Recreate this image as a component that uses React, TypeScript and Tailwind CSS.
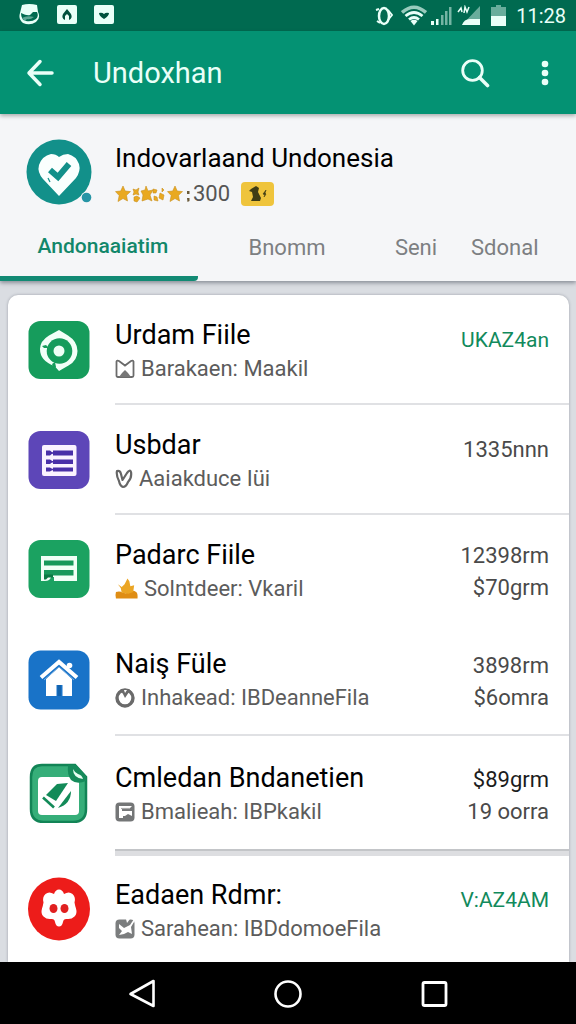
import type { ReactNode } from "react";

type Row = {
  title: string;
  sub: string;
  trailing: string[];
  accent?: boolean;
  strong?: boolean;
  divider?: boolean;
  height: string;
  icon: ReactNode;
  subIcon: ReactNode;
};

const TargetIcon = () => (
  <svg viewBox="0 0 62 60" className="h-[60px] w-[62px]" aria-hidden="true">
    <rect x="0.5" y="1" width="61" height="58" rx="12" fill="#169c5c" />
    <path d="M31 10l9 5.500q9.500 6 9.500 15.500t-9 14.500L31 51l-4.500-5Q12 41 12 29q0-8 9-13.500z" fill="#f2fff8" />
    <circle cx="31.500" cy="31" r="12.800" fill="#169c5c" />
    <path d="M14 26l4-1 3 3-5 0zM24 44l3-2 1 5-2 2z" fill="#169c5c" />
    <circle cx="31" cy="31" r="5.500" fill="#effff6" />
  </svg>
);

const ListIcon = () => (
  <svg viewBox="0 0 62 60" className="h-[60px] w-[62px]" aria-hidden="true">
    <rect x="0.500" y="1" width="61" height="58" rx="12" fill="#5d46b8" />
    <rect x="14" y="15" width="34.500" height="31" rx="2" fill="#fbf3ff" />
    <path d="M25 20.500h20v5H25zM25 29.500h20v4.500H25zM25 37.500h20v4H25z" fill="#4a30a8" />
    <path d="M18 20.500h4l3 2.500-3 2.500h-4zM18 29.500h4l3 2-3 2.500h-4zM18 37.500h4l3 2-3 2h-4z" fill="#4a30a8" />
    <path d="M22 23h4M22 31.700h4M22 39.500h4" stroke="#4a30a8" strokeWidth="1.500" />
  </svg>
);

const CardIcon = () => (
  <svg viewBox="0 0 62 60" className="h-[60px] w-[62px]" aria-hidden="true">
    <rect x="0.500" y="1" width="61" height="58" rx="12" fill="#1ba261" />
    <path d="M13 17h36v25H26v-4h-3q-1 4-6 4h-4z" fill="#f0fff6" />
    <path d="M16 21.500h29.500v5H16zM16 31h29.500v5.500H16z" fill="#16995a" />
    <path d="M16 35.500h9v3h-5l-2 2h-2z" fill="#087a43" />
  </svg>
);

const HouseIcon = () => (
  <svg viewBox="0 0 62 60" className="h-[60px] w-[62px]" aria-hidden="true">
    <rect x="0.500" y="0.500" width="61" height="59" rx="12" fill="#1973c8" />
    <path d="M31 17L18 29v17h10.500V35h6v11H44V29z" fill="#fff" />
    <path d="M13 27.500L31 12l18 15.500" fill="none" stroke="#fff" strokeWidth="4" />
    <path d="M16 30L31 17l15 13" fill="none" stroke="#75aee2" strokeWidth="1" />
    <circle cx="41.500" cy="15.500" r="2.800" fill="#fff" />
    <path d="M29.500 35H33v11h-3.500z" fill="#1262ad" />
  </svg>
);

const NoteIcon = () => (
  <svg viewBox="0 0 62 60" className="h-[60px] w-[62px]" aria-hidden="true">
    <path d="M14 2h33l11 12v32q0 13-13 13H16Q3 59 3 46V14Q3 2 14 2z" fill="#36ae79" stroke="#128456" strokeWidth="2.500" />
    <rect x="10" y="14" width="41" height="38" rx="4" fill="#fff" />
    <path d="M40 2h8l10 11v5q-9 4-15-1-4-5-3-15z" fill="#168b5b" />
    <path d="M45 6q0 9 10 10-1-4-5-5-3-1-5-5z" fill="#e8fff3" />
    <path d="M18 32l11-11 11-1-12 18z" fill="#128a58" />
    <path d="M15 34.500l11 10" stroke="#128a58" strokeWidth="2.600" />
    <path d="M30 45l13-17q0 13-13 17z" fill="#128a58" />
  </svg>
);

const FlowerIcon = () => (
  <svg viewBox="0 0 64 64" className="-mx-px h-[64px] w-[64px]" aria-hidden="true">
    <ellipse cx="32" cy="32" rx="31" ry="31.500" fill="#ed1c1a" />
    <path
      d="M32 12.500q3.500 0 5 4.500 5-3 8.500 0 3.500 3 2 8.500.5 3 1.500 6 1.500 5-1.500 8t-7.500 2.500q-3.500-.5-4 3-1 4.500-4 4.500t-4-4.500q-.5-3.500-4-3-4.500.5-7.500-2.500t-1.500-8q1-3 1.500-6-1.500-5.500 2-8.500 3.500-3 8.500 0 1.500-4.500 5-4.500z"
      fill="#fff"
    />
    <ellipse cx="26.500" cy="31.500" rx="4" ry="4.500" fill="#e02020" />
    <ellipse cx="37.500" cy="31.500" rx="4" ry="4.500" fill="#e02020" />
  </svg>
);

const EnvelopeMini = () => (
  <svg viewBox="0 0 20 20" className="h-5 w-5" aria-hidden="true">
    <path d="M1.500 2.500Q2 1 4 2l6 4.500L16 2q2-1 2.500.5v14q0 1.500-1.500 1.500H3q-1.500 0-1.500-1.500z" fill="none" stroke="#6b6b6b" strokeWidth="1.800" />
    <path d="M4 18l3-4 3-3 3 3 3 4z" fill="#777" />
  </svg>
);

const HeartMini = () => (
  <svg viewBox="0 0 18 20" className="h-5 w-[18px]" aria-hidden="true">
    <path d="M2 2q3-1 4 3l1.500 6L12 4q3-4 4-1 1 6-3 10-2 5-5 5-3-1-4-6Q1 6 2 2z" fill="none" stroke="#666" strokeWidth="2.200" strokeLinejoin="round" />
  </svg>
);

const FlameMini = () => (
  <svg viewBox="0 0 24 22" className="h-[22px] w-[23px]" aria-hidden="true">
    <path d="M1 14q5-1 7 1 3 1 6 0 4-4 8-1 2 1 1.500 7H1q-1-4 0-7z" fill="#df8d14" />
    <path d="M3 6l4 3 3-3 3-6 2 3 1 5 4-1-1 7-5 2-7-1-1-5z" fill="#eba524" />
  </svg>
);

const ClockMini = () => (
  <svg viewBox="0 0 20 20" className="h-5 w-5" aria-hidden="true">
    <circle cx="10" cy="10" r="8" fill="#fff" stroke="#6a6a6a" strokeWidth="3.400" />
    <path d="M5 2l3 4 2 4 4-6 2-1-2-2H7z" fill="#6a6a6a" />
    <path d="M9 2l1 3 2-3z" fill="#fff" />
  </svg>
);

const FlagMini = () => (
  <svg viewBox="0 0 20 20" className="h-5 w-5" aria-hidden="true">
    <rect x="0.500" y="0.500" width="19" height="19" rx="4" fill="#747677" />
    <path d="M4 4h13l-3 3H7v2h10v5l-4-2-3 2H8v2H4z" fill="#fff" />
    <path d="M6 6.500h9" stroke="#aaa" strokeWidth="1.200" />
  </svg>
);

const PhotoMini = () => (
  <svg viewBox="0 0 20 20" className="h-5 w-5" aria-hidden="true">
    <rect x="0.500" y="0.500" width="19" height="19" rx="4" fill="#7b7d7e" />
    <path d="M4 5l5 4 6-3 4-6v3l-3 5 1 7-4-2-4 2-5 1 3-4-3-3z" fill="#fff" />
    <path d="M11 0l4 0-3 4z" fill="#fff" />
  </svg>
);

const groups: Row[][] = [
  [
    { title: "Urdam Fiile", sub: "Barakaen: Maakil", trailing: ["UKAZ4an"], accent: true, divider: true, height: "h-[110px]", icon: <TargetIcon />, subIcon: <EnvelopeMini /> },
    { title: "Usbdar", sub: "Aaiakduce Iüi", trailing: ["1335nnn"], divider: true, height: "h-[110px]", icon: <ListIcon />, subIcon: <HeartMini /> },
    { title: "Padarc Fiile", sub: "Solntdeer: Vkaril", trailing: ["12398rm", "$70grm"], height: "h-[108px]", icon: <CardIcon />, subIcon: <FlameMini /> },
    { title: "Naiş Füle", sub: "Inhakead: IBDeanneFila", trailing: ["3898rm", "$6omra"], divider: true, height: "h-[113px]", icon: <HouseIcon />, subIcon: <ClockMini /> },
    { title: "Cmledan Bndanetien", sub: "Bmalieah: IBPkakil", trailing: ["$89grm", "19 oorra"], strong: true, height: "h-[113px]", icon: <NoteIcon />, subIcon: <FlagMini /> },
  ],
  [
    { title: "Eadaen Rdmr:", sub: "Sarahean: IBDdomoeFila", trailing: ["V:AZ4AM"], accent: true, height: "h-[106px]", icon: <FlowerIcon />, subIcon: <PhotoMini /> },
  ],
];

function ListRow({ row }: { row: Row }) {
  return (
    <li className={`flex items-stretch pl-5 ${row.height}`}>
      <div className="flex w-[87px] shrink-0 items-center">{row.icon}</div>
      <div className={`flex min-w-0 flex-1 items-center justify-between pr-5 ${row.divider ? "border-b-2 border-[#e0e1e4]" : ""}`}>
        <div className="min-w-0 pt-px">
          <h2 className="whitespace-nowrap text-[27px] leading-[38px] text-black">{row.title}</h2>
          <p className="flex items-center gap-[6px] whitespace-nowrap text-[22px] leading-[30px] text-[#5c5c5c]">
            {row.subIcon}
            <span>{row.sub}</span>
          </p>
        </div>
        <div
          className={`flex h-[70px] shrink-0 flex-col text-right leading-8 ${row.trailing.length === 1 ? "pt-[10px]" : "pt-[6px]"} ${
            row.accent ? "text-[21px] text-[#128a5c]" : "text-[22px] text-[#4a4a4a]"
          }`}
        >
          {row.trailing.map((t, i) => (
            <span key={t} className={row.strong && i === 0 ? "text-[#1c1c1c]" : ""}>{t}</span>
          ))}
        </div>
      </div>
    </li>
  );
}

function StatusBar() {
  return (
    <div className="flex h-[31px] items-center justify-between bg-[#006a50] pl-[19px] pr-[10px] text-[#e9fff8]">
      <div className="flex items-center gap-[17px] pb-[3px]">
        <svg viewBox="0 0 21 21" className="h-[21px] w-[21px]" aria-hidden="true">
          <path d="M3 1q7-2 15 0l1 7q3 6-2 10-6 4-13 1-5-4-3-10z" fill="currentColor" />
          <path d="M2 9q6 3 9 2l3-3h4q2 4-1 7-4 3-10 2-5-1-5-8z" fill="#006a50" />
          <path d="M3 14q5-3 12-1-4 3-7 2l-2 2z" fill="currentColor" opacity=".4" />
        </svg>
        <svg viewBox="0 0 20 19" className="h-[19px] w-5" aria-hidden="true">
          <rect width="20" height="19" rx="2" fill="currentColor" />
          <path d="M10 4l4 5q2 4-2 6l0-4-2-2-2 2v4q-4-2-2-6z" fill="#00513d" />
        </svg>
        <svg viewBox="0 0 20 19" className="h-[19px] w-5" aria-hidden="true">
          <rect width="20" height="19" rx="2" fill="currentColor" />
          <path d="M5 8q3-1 5 1 2-2 5-1 0 3-5 6-5-3-5-6z" fill="#00513d" />
        </svg>
      </div>
      <div className="flex items-center">
        <svg viewBox="0 0 18 22" className="h-[22px] w-[18px]" aria-hidden="true">
          <ellipse cx="9" cy="11" rx="5" ry="8" fill="none" stroke="currentColor" strokeWidth="2.500" />
          <path d="M1 5l3-1M13 5l4 5-4 5M2 16l3 2" stroke="currentColor" strokeWidth="2" fill="none" />
        </svg>
        <svg viewBox="0 0 26 22" className="ml-2 h-[22px] w-[26px]" aria-hidden="true">
          <path d="M1 7.500Q13-3 25 7.500" fill="none" stroke="currentColor" strokeWidth="3.500" opacity=".65" />
          <path d="M4.500 11q8.500-7 17 0M8 14.500q5-4 10 0" fill="none" stroke="currentColor" strokeWidth="2.800" />
          <path d="M9.500 16q3.500-2.500 7 0L13 20.500z" fill="currentColor" />
        </svg>
        <svg viewBox="0 0 22 22" className="ml-[3px] h-[22px] w-[22px]" aria-hidden="true">
          <path d="M1 16h3v4H1zM6 14h2.500v6H6z" fill="currentColor" />
          <path d="M11 10h2.500v10H11zM15 6h2.500v14H15zM19 2h2.500v18H19z" fill="currentColor" opacity=".5" />
        </svg>
        <svg viewBox="0 0 24 22" className="ml-[5px] h-[22px] w-6" aria-hidden="true">
          <path d="M23 1v19H5z" fill="currentColor" opacity=".45" />
          <path d="M5 20q2-6 8-6h10v6z" fill="currentColor" />
          <path d="M1 7l3-4 1 4M7 8l1-6 2 5 2-5" fill="none" stroke="currentColor" strokeWidth="1.500" />
        </svg>
        <svg viewBox="0 0 15 22" className="ml-[10px] h-[22px] w-[15px]" aria-hidden="true">
          <path d="M5 0h5v2h5v9H0V2h5z" fill="currentColor" opacity=".45" />
          <path d="M0 11h15v10H0z" fill="currentColor" />
        </svg>
        <span className="ml-[10px] text-[20px] leading-7">11:28</span>
      </div>
    </div>
  );
}

function Stars() {
  return (
    <svg viewBox="0 0 76 20" className="h-5 w-[76px]" role="img" aria-label="Rating">
      <g fill="#e9a921" stroke="#c9901f" strokeWidth="0.600">
        <path d="M8 2l2.200 5 5.300.6-4 3.700 1 5.700L8 14.500 3 17.500l1.200-6L.5 7.600l5.200-.6z" />
        <path d="M18 5l3 1 3-2-1 4 1 3-3-1-3 1 1-3zM19 13l3-1 3 2-3 4-3-1z" />
        <path d="M31 2l2 5 5-1-3 5 2 6-4-2-6 2 1-6-2-4 4-1z" />
        <path d="M38 5l4 1-1 3-3 0zM39 12l3 1 1 4-4-1zM45 9l4 2-1 5-4-2zM47 4l2 2-2 2z" />
        <path d="M60 2l2.200 5 5.300.6-4 3.700 1 5.700-4.500-2.500-5 3 1.200-6-3.700-3.900 5.200-.6z" />
      </g>
      <path d="M72 7h2.500v3H72zM72 14h2.500v3l-2 1z" fill="#6b5a3a" />
    </svg>
  );
}

const tabs = ["Andonaaiatim", "Bnomm", "Seni", "Sdonal"];

export default function App() {
  return (
    <div className="flex min-h-screen flex-col bg-[#dadde2] font-['Roboto',sans-serif]">
      <StatusBar />
      <header className="relative z-10 flex h-[83px] items-center bg-[#049273] pl-[26px] pr-[21px] text-[#eafff8] shadow-[0_2px_4px_rgba(0,0,0,0.3)]">
        <button type="button" aria-label="Back" className="flex h-10 w-[67px] items-center">
          <svg viewBox="0 0 28 28" className="h-7 w-7" fill="none" stroke="currentColor" strokeWidth="3.500" strokeLinecap="round" strokeLinejoin="round" aria-hidden="true">
            <path d="M14 2.500L3 14l11 11.500M3 14h23" />
          </svg>
        </button>
        <h1 className="flex-1 text-[29px] leading-9">Undoxhan</h1>
        <button type="button" aria-label="Search" className="flex h-10 w-[75px] items-center">
          <svg viewBox="0 0 30 30" className="h-[30px] w-[30px]" fill="none" stroke="currentColor" aria-hidden="true">
            <circle cx="12.500" cy="12.500" r="9.800" strokeWidth="2.800" />
            <path d="M19.500 19.500l8 8" strokeWidth="3.600" strokeLinecap="round" />
          </svg>
        </button>
        <button type="button" aria-label="More options" className="flex h-10 w-5 items-center justify-center">
          <svg viewBox="0 0 8 26" className="h-[26px] w-2" fill="currentColor" aria-hidden="true">
            <circle cx="4" cy="4" r="3.300" />
            <circle cx="4" cy="13" r="3.300" />
            <circle cx="4" cy="22" r="3.300" />
          </svg>
        </button>
      </header>

      <section className="bg-[#f5f6f8] shadow-[0_2px_4px_rgba(60,65,80,0.5)]">
        <div className="flex items-start pl-[26px] pt-[25px]">
          <svg viewBox="0 0 67 67" className="h-[67px] w-[67px]" aria-hidden="true">
            <circle cx="33" cy="33" r="32.500" fill="#12908a" />
            <path d="M33 57L17 40q-6-7-4-14 3-9 12-11 5 0 8 3 4-3 9-3 8 2 11 10 2 7-3 14z" fill="#fafffe" />
            <path d="M24 31l8 7 11-13" fill="none" stroke="#12908a" strokeWidth="6" />
            <path d="M22 39l2 4" stroke="#12908a" strokeWidth="1.200" />
            <circle cx="60.500" cy="58.500" r="5.800" fill="#f5f6f8" />
            <circle cx="60.500" cy="58.500" r="4.800" fill="#2695a5" />
          </svg>
          <div className="ml-[22px]">
            <h2 className="text-[26px] leading-[38px] text-black">Indovarlaand Undonesia</h2>
            <div className="flex items-center text-[22px] leading-[34px] text-[#555]">
              <Stars />
              <span className="ml-[2px]">300</span>
              <span className="ml-[11px] flex h-6 w-[33px] items-center justify-center rounded bg-[#efc43c]">
                <svg viewBox="0 0 20 16" className="h-4 w-5" fill="#3f3c14" aria-hidden="true">
                  <path d="M3 3l5-3 3 2-1 4 3 6-1 3H3l2-4-1-5-3-1z" />
                  <path d="M18 4l-3 4 2 1-1 2 2-3-1-1z" stroke="#3f3c14" strokeWidth="0.600" />
                </svg>
              </span>
            </div>
          </div>
        </div>
        <nav className="grid grid-cols-[198fr_178fr_80fr_120fr] pt-[17px] text-[22px]">
          {tabs.map((tab, i) => (
            <button
              type="button"
              key={tab}
              className={
                i === 0
                  ? "h-[53px] rounded-r-sm border-b-[5px] border-[#128a74] pb-[10px] pl-2 text-[21px] font-medium text-[#12876a]"
                  : i === 3
                    ? "h-[53px] border-b-[5px] border-transparent pb-[10px] pl-[15px] text-left text-[#7d7f82]"
                    : "h-[53px] border-b-[5px] border-transparent pb-[10px] text-[#7d7f82]"
              }
            >
              {tab}
            </button>
          ))}
        </nav>
      </section>

      <main className="ml-2 mr-[7px] mt-[14px] flex-1 overflow-hidden rounded-t-[10px] bg-white shadow-[0_0_3px_rgba(60,65,80,0.4)]">
        <ul>
          {groups[0].map((row) => (
            <ListRow key={row.title} row={row} />
          ))}
        </ul>
        <div className="ml-[107px] h-[7px] border-t-2 border-[#c3c5c8] bg-[#dddee1]" />
        <ul>
          {groups[1].map((row) => (
            <ListRow key={row.title} row={row} />
          ))}
        </ul>
      </main>

      <footer className="relative flex h-[62px] items-center justify-center gap-[116px] bg-black text-white">
        <button type="button" aria-label="Back">
          <svg viewBox="0 0 30 30" className="h-[30px] w-[30px]" fill="none" stroke="currentColor" strokeWidth="2.600" strokeLinejoin="round" aria-hidden="true">
            <path d="M26.500 3v25L3.500 16z" />
          </svg>
        </button>
        <button type="button" aria-label="Home">
          <svg viewBox="0 0 30 30" className="h-[30px] w-[30px]" fill="none" stroke="currentColor" strokeWidth="2.600" aria-hidden="true">
            <circle cx="15" cy="16" r="12.500" />
          </svg>
        </button>
        <button type="button" aria-label="Recent apps">
          <svg viewBox="0 0 30 30" className="h-[30px] w-[30px]" fill="none" stroke="currentColor" strokeWidth="2.800" aria-hidden="true">
            <rect x="4" y="4.500" width="23" height="23" rx="1.500" />
          </svg>
        </button>
      </footer>
    </div>
  );
}
